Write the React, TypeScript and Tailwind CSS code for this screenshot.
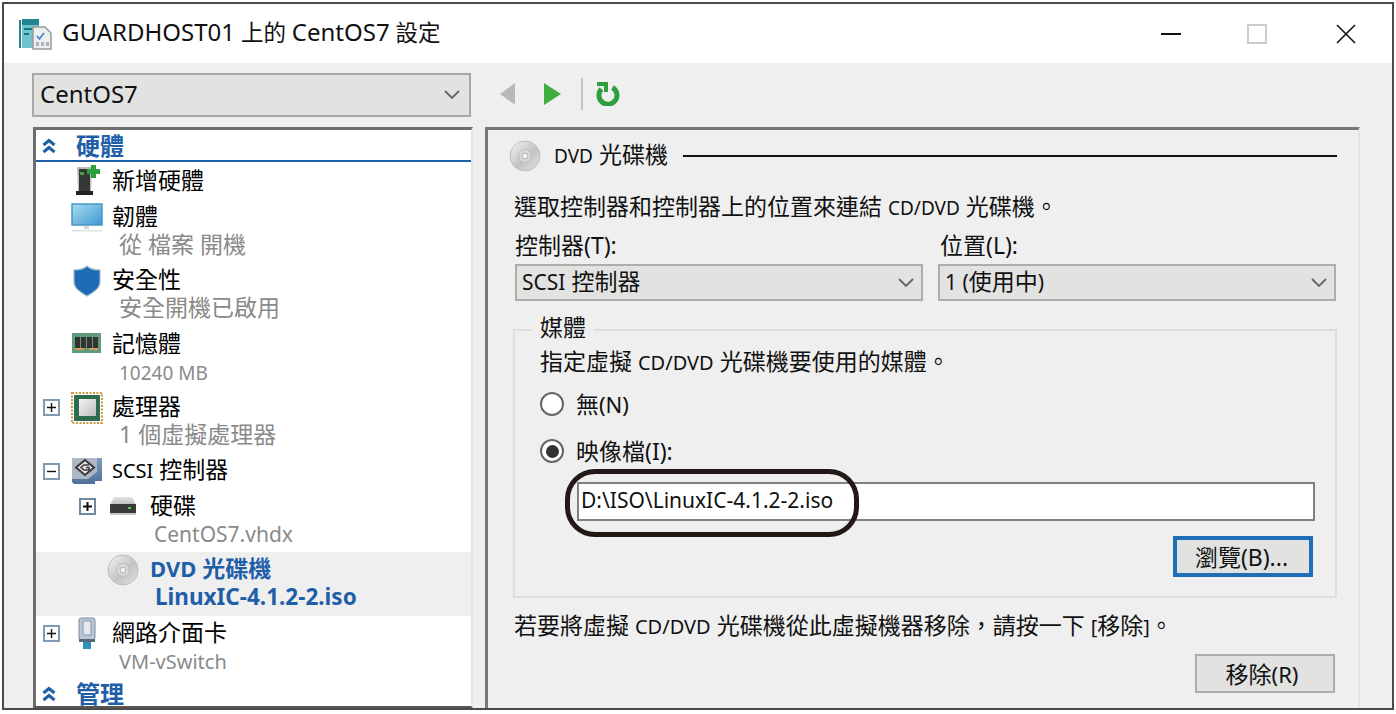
import { ReactNode } from "react"

const blue = "text-[#1f5fa8]"

function TitleIcon() {
  return (
    <svg width="33" height="32" viewBox="0 0 33 32">
      <rect x="0" y="2" width="2" height="28" fill="#1f8490" />
      <rect x="3" y="1" width="17" height="29" fill="#6fc3ca" />
      <rect x="3" y="1" width="17" height="6" fill="#1f8490" />
      <rect x="5" y="10" width="8" height="2" fill="#1f7480" />
      <rect x="5" y="15" width="5" height="2" fill="#1f7480" />
      <path d="M14 9h12l6 6v16H14z" fill="#eceff0" stroke="#9a9a9a" strokeWidth="1.5" />
      <path d="M18 18l2.5 3 4.5-6" fill="none" stroke="#3f7fc0" strokeWidth="1.6" />
      <rect x="17" y="24" width="3" height="4" fill="#b0b4b6" />
      <rect x="22" y="24" width="3" height="4" fill="#b0b4b6" />
      <rect x="27" y="24" width="3" height="4" fill="#b0b4b6" />
    </svg>
  )
}

function AddIcon() {
  return (
    <svg width="32" height="32" viewBox="0 0 32 32">
      <path d="M6 2h15l-1 24H7z" fill="#b9bcbc" />
      <rect x="8" y="4" width="11" height="22" fill="#343836" />
      <rect x="9" y="7" width="4" height="3" fill="#46a046" />
      <rect x="5" y="26" width="17" height="4" fill="#222" />
      <path d="M20 0h5v4h4v5h-4v4h-5V9h-4V4h4z" fill="#2f9e3c" />
    </svg>
  )
}

function MonitorIcon() {
  return (
    <svg width="32" height="32" viewBox="0 0 32 32">
      <defs>
        <linearGradient id="mon" x1="0" y1="0" x2="1" y2="1">
          <stop offset="0" stopColor="#a8dcf2" />
          <stop offset="1" stopColor="#3f97d2" />
        </linearGradient>
      </defs>
      <rect x="1" y="3" width="30" height="21" fill="url(#mon)" stroke="#4a96c4" strokeWidth="1.5" />
      <rect x="13" y="25" width="5" height="3" fill="#d5dadd" />
      <rect x="1" y="29" width="30" height="1.5" fill="#dfe3e5" />
    </svg>
  )
}

function ShieldIcon() {
  return (
    <svg width="32" height="32" viewBox="0 0 32 32">
      <path d="M16 1c3 3 8 4 13 4v12c0 7-8 11-13 14-5-3-13-7-13-14V5c5 0 10-1 13-4z" fill="#1c6bb4" stroke="#a5bccf" strokeWidth="1.2" />
    </svg>
  )
}

function RamIcon() {
  return (
    <svg width="32" height="32" viewBox="0 0 32 32">
      <rect x="1" y="5" width="29" height="20" fill="#5f9c7c" />
      <rect x="4" y="9" width="5" height="11" fill="#333" />
      <rect x="10" y="9" width="5" height="11" fill="#333" />
      <rect x="16" y="9" width="5" height="11" fill="#333" />
      <rect x="22" y="9" width="5" height="11" fill="#333" />
      <rect x="4" y="20" width="9" height="2" fill="#d99a5a" />
      <rect x="18" y="20" width="9" height="2" fill="#d99a5a" />
    </svg>
  )
}

function CpuIcon() {
  return (
    <svg width="32" height="32" viewBox="0 0 32 32">
      <defs>
        <linearGradient id="die" x1="0" y1="0" x2="1" y2="1">
          <stop offset="0" stopColor="#f5f5f5" />
          <stop offset="1" stopColor="#bdbdbd" />
        </linearGradient>
      </defs>
      <rect x="1" y="1" width="30" height="30" fill="none" stroke="#c49a3c" strokeWidth="2" strokeDasharray="2 1.5" />
      <rect x="3" y="3" width="26" height="26" fill="#2f6b50" />
      <rect x="8" y="7" width="17" height="17" fill="url(#die)" />
    </svg>
  )
}

function ScsiIcon() {
  return (
    <svg width="32" height="28" viewBox="0 0 32 28">
      <defs>
        <linearGradient id="scsi" x1="0" y1="0" x2="0" y2="1">
          <stop offset="0" stopColor="#7f9cc2" />
          <stop offset="1" stopColor="#4f6f9a" />
        </linearGradient>
      </defs>
      <path d="M1 1h30v23h-7v3H3l-2-2z" fill="url(#scsi)" />
      <path d="M1 1h25v14L17 22H1z" fill="#aeb8c4" />
      <path d="M14 3l9 7.5L14 18l-9-7.5z" fill="#e4e4e4" stroke="#3a3a3a" strokeWidth="2" />
      <path d="M18 8h-5l-3 2.5 3 2.5h5v-2.5h-3" fill="none" stroke="#3a3a3a" strokeWidth="1.6" />
    </svg>
  )
}

function HddIcon() {
  return (
    <svg width="28" height="20" viewBox="0 0 28 20">
      <defs>
        <linearGradient id="hddtop" x1="0" y1="0" x2="0" y2="1">
          <stop offset="0" stopColor="#e4e4e4" />
          <stop offset="1" stopColor="#bdbdbd" />
        </linearGradient>
      </defs>
      <path d="M5 1h18l4 8H1z" fill="url(#hddtop)" />
      <rect x="1" y="8" width="26" height="9" fill="#3a3a3a" />
      <rect x="1" y="17" width="26" height="2" fill="#c9c9c9" />
      <rect x="19" y="11" width="3" height="2" fill="#5fc05f" />
    </svg>
  )
}

function DiscIcon() {
  return (
    <svg width="32" height="32" viewBox="0 0 32 32">
      <defs>
        <linearGradient id="disc" x1="0" y1="0" x2="1" y2="1">
          <stop offset="0" stopColor="#f4f4f4" />
          <stop offset="0.55" stopColor="#c4c4c4" />
          <stop offset="1" stopColor="#e2e2e2" />
        </linearGradient>
      </defs>
      <circle cx="16" cy="16" r="15" fill="url(#disc)" stroke="#bdbdbd" />
      <circle cx="16" cy="16" r="6.5" fill="#d8d8d8" stroke="#bcbcbc" />
      <circle cx="16" cy="16" r="3" fill="#efefef" stroke="#b2b2b2" />
    </svg>
  )
}

function NicIcon() {
  return (
    <svg width="32" height="32" viewBox="0 0 32 32">
      <rect x="8" y="1" width="16" height="22" rx="2" fill="#b9c6d4" stroke="#7d8ea0" />
      <rect x="12" y="4" width="8" height="14" fill="#e4e9ee" stroke="#8a98a8" />
      <rect x="8" y="22" width="16" height="3" fill="#56687c" />
      <rect x="12" y="25" width="8" height="7" fill="#2f8fbf" />
    </svg>
  )
}

function ChevronUp() {
  return (
    <svg width="14" height="16" viewBox="0 0 14 16">
      <path d="M1.5 7l5.5-4.5L12.500 7M1.500 14l5.500-4.500 5.500 4.500" fill="none" stroke="#1f5fa8" strokeWidth="3" />
    </svg>
  )
}

function Expander({ open, dark }: { open?: boolean; dark?: boolean }) {
  return (
    <span className={"flex h-[17px] w-[17px] items-center justify-center border-2 bg-white " + (dark ? "border-[#6d88a0]" : "border-[#7f9ab2]")}>
      <svg width="11" height="11" viewBox="0 0 11 11">
        <path d={open ? "M1 5.5h9" : "M1 5.5h9M5.5 1v9"} stroke="#111" strokeWidth={dark ? 2 : 1.4} />
      </svg>
    </span>
  )
}

function DropArrow() {
  return (
    <svg width="16" height="10" viewBox="0 0 16 10">
      <path d="M1 1l7 7 7-7" fill="none" stroke="#666" strokeWidth="1.8" />
    </svg>
  )
}

function Section({ label, line }: { label: string; line?: boolean }) {
  return (
    <div className={"flex shrink-0 items-center pl-[6px] " + (line ? "h-[32px] border-b-2 border-[#1f5fa8] pt-[1px]" : "h-[27px] pt-[2px]")}>
      <ChevronUp />
      <span className={"ml-[20px] text-[24px] font-bold leading-[22px] " + blue}>{label}</span>
    </div>
  )
}

type ItemProps = {
  icon: ReactNode
  label: ReactNode
  sub?: ReactNode
  expand?: "plus" | "minus"
  nested?: boolean
  selected?: boolean
}

function Item({ icon, label, sub, expand, nested, selected }: ItemProps) {
  return (
    <div className={"shrink-0 py-[3px] " + (selected ? "bg-[#efefef]" : "")}>
      <div className={"flex h-[29px] items-center " + (nested ? "pl-[43px]" : "pl-[7px]")}>
        <span className="flex w-[17px] justify-center">
          {expand && <Expander open={expand === "minus"} dark={nested} />}
        </span>
        <span className="ml-[11px] flex h-[29px] w-[32px] items-center justify-center">{icon}</span>
        <span className={"mb-[2px] whitespace-nowrap leading-[27px] " + (nested ? "ml-[11px] " : "ml-[9px] ") + (selected ? "font-bold " + blue : "text-black")}>
          {label}
        </span>
      </div>
      {sub && (
        <div className={"h-[28.5px] whitespace-nowrap leading-[24.5px] " + (nested ? "pl-[118px] " : "pl-[83px] ") + (selected ? "font-bold " + blue : "text-[#8a8a8a]")}>
          {sub}
        </div>
      )}
    </div>
  )
}

function Select({ children }: { children: ReactNode }) {
  return (
    <div className="flex h-[37px] items-center justify-between border-2 border-[#adadad] bg-[#e2e2e1] pl-[5px] pr-[7px]">
      <span className="mb-[2px]">{children}</span>
      <DropArrow />
    </div>
  )
}

function Radio({ checked, children }: { checked?: boolean; children: ReactNode }) {
  return (
    <div className="flex h-[30px] items-center">
      <span className="flex h-[24px] w-[24px] items-center justify-center rounded-full border-2 border-[#666] bg-white">
        {checked && <span className="h-[13px] w-[13px] rounded-full bg-[#333]" />}
      </span>
      <span className="ml-[12px]">{children}</span>
    </div>
  )
}

export default function App() {
  return (
    <div className="h-[714px] w-[1396px] overflow-hidden bg-white pb-[4px] pl-[2px] pr-[2px] pt-[2px] font-['Noto_Sans','Noto_Sans_CJK_TC',sans-serif] text-[23px] leading-[30px] text-[#111]">
      <div className="flex h-full flex-col border-2 border-[#4e4a46]">
        <div className="flex h-[59px] shrink-0 items-center bg-white pl-[15px] pr-[36px]">
          <TitleIcon />
          <span className="mb-[2px] ml-[10px] text-[22.5px]">
            <span className="text-[24px]">GUARDHOST01</span> 上的 <span className="text-[24px]">CentOS7</span> 設定
          </span>
          <span className="ml-auto h-[2px] w-[20px] bg-[#111]" />
          <span className="ml-[66px] h-[20px] w-[20px] border-2 border-[#cccccc]" />
          <svg className="ml-[69px]" width="20" height="20" viewBox="0 0 20 20">
            <path d="M1 1l18 18M19 1L1 19" stroke="#111" strokeWidth="1.6" />
          </svg>
        </div>

        <div className="grid min-h-0 flex-1 grid-cols-[441px_875px] grid-rows-[44px_1fr] gap-x-[12px] gap-y-[10px] bg-[#efefef] pl-[28px] pt-[10px]">
          <div className="flex w-[439px] items-center justify-between border-2 border-[#a8a8a8] bg-[#e2e2e1] pl-[6px] pr-[9px]">
            <span className="mb-[2px] text-[24px]">CentOS7</span>
            <DropArrow />
          </div>
          <div className="flex items-center pb-[2px] pl-[15px]">
            <svg width="16" height="22" viewBox="0 0 16 22">
              <path d="M15 0v22L0 11z" fill="#b8b8b8" />
            </svg>
            <svg className="ml-[28px]" width="17" height="22" viewBox="0 0 17 22">
              <path d="M0 0v22l17-11z" fill="#3fae3f" />
            </svg>
            <span className="ml-[20px] h-[32px] w-[2px] bg-[#c4c4c4]" />
            <svg className="ml-[13px]" width="24" height="24" viewBox="0 0 24 24">
              <path d="M5.5 7a9 9 0 1 0 11-1.500" fill="none" stroke="#2e9e3e" strokeWidth="5" />
              <path d="M1 0h11v10H8V4H1z" fill="#2e9e3e" />
            </svg>
          </div>

          <div className="ml-[1px] flex w-[440px] flex-col border-b-2 border-l-[3px] border-r-2 border-t-[3px] border-b-[#555] border-l-[#6e6e6e] border-r-[#e6e6e6] border-t-[#6e6e6e] bg-white">
            <Section label="硬體" line />
            <div className="h-[37.5px] shrink-0 pt-[1.5px]">
              <Item icon={<AddIcon />} label="新增硬體" />
            </div>
            <Item icon={<MonitorIcon />} label="韌體" sub="從 檔案 開機" />
            <Item icon={<ShieldIcon />} label="安全性" sub="安全開機已啟用" />
            <Item icon={<RamIcon />} label="記憶體" sub={<span className="text-[19px]">10240 MB</span>} />
            <Item icon={<CpuIcon />} expand="plus" label="處理器" sub="1 個虛擬處理器" />
            <Item icon={<ScsiIcon />} expand="minus" label={<><span className="text-[20px]">SCSI</span> 控制器</>} />
            <Item icon={<HddIcon />} expand="plus" nested label="硬碟" sub={<span className="text-[21px]">CentOS7.vhdx</span>} />
            <Item
              icon={<DiscIcon />}
              nested
              selected
              label={<><span className="text-[22px]">DVD</span> 光碟機</>}
              sub={<span className="ml-[1px] text-[22.5px]">LinuxIC-4.1.2-2.iso</span>}
            />
            <Item icon={<NicIcon />} expand="plus" label="網路介面卡" sub={<span className="text-[20px]">VM-vSwitch</span>} />
            <Section label="管理" />
          </div>

          <div className="flex flex-col border-l-[3px] border-r-2 border-t-[3px] border-l-[#777] border-r-[#e4e4e4] border-t-[#777] pl-[26px] pr-[21px] pt-[10px]">
            <div className="-ml-[5px] flex h-[32px] shrink-0 items-center">
              <DiscIcon />
              <span className="mb-[2px] ml-[13px] whitespace-nowrap"><span className="text-[19px]">DVD</span> 光碟機</span>
              <span className="ml-[15px] h-[2px] flex-1 bg-[#111]" />
            </div>
            <div className="mt-[19px] h-[32px] leading-[30px]">
              選取控制器和控制器上的位置來連結 <span className="text-[19px]">CD/DVD</span> 光碟機。
            </div>
            <div className="mt-[8px] grid grid-cols-[408px_398px] gap-x-[15px] pl-[1px]">
              <div className="h-[30px] leading-[29px]">控制器<span className="text-[23px]">(T):</span></div>
              <div className="h-[30px] pl-[2px] leading-[29px]">位置<span className="text-[23px]">(L):</span></div>
            </div>
            <div className="mt-[3px] grid grid-cols-[408px_398px] gap-x-[15px] pl-[1px]">
              <Select><span className="text-[21px]">SCSI</span> 控制器</Select>
              <Select><span className="text-[21px]">1 (</span>使用中<span className="text-[21px]">)</span></Select>
            </div>

            <fieldset className="-ml-[1px] mt-[13px] flex flex-col border-2 border-t-2 border-[#dedede] pb-[19px] pl-[25px] pr-[20px] pt-[1px]">
              <legend className="ml-[-8px] px-[8px] pb-[6px] leading-[26px]">媒體</legend>
              <div className="h-[30px] leading-[29px]">指定虛擬 <span className="text-[20px]">CD/DVD</span> 光碟機要使用的媒體。</div>
              <div className="mt-[12px]">
                <Radio>無<span className="text-[22px]">(N)</span></Radio>
              </div>
              <div className="mt-[17px]">
                <Radio checked>映像檔<span className="text-[23px]">(I):</span></Radio>
              </div>
              <div className="relative ml-[37px] mt-[16px] flex h-[39px] items-center border-2 border-[#808080] bg-white pb-[3px] pl-[2px] text-[21px]">
                D:\ISO\LinuxIC-4.1.2-2.iso
                <div className="pointer-events-none absolute left-[-14px] top-[-15px] h-[68px] w-[294px] rounded-[30px] border-[5px] border-[#231815]" />
              </div>
              <div className="mr-[2px] mt-[15px] flex h-[41px] w-[140px] items-center justify-center self-end border-4 border-[#1f6fb8] bg-[#e2e2e1] pr-[3px]">
                瀏覽<span className="text-[23px]">(B)...</span>
              </div>
            </fieldset>

            <div className="mt-[13px] h-[30px] whitespace-nowrap leading-[28px]">
              若要將虛擬 <span className="text-[20px]">CD/DVD</span> 光碟機從此虛擬機器移除，請按一下 <span className="text-[20px]">[</span>移除<span className="text-[20px]">]</span>。
            </div>
            <div className="mr-[2px] mt-[13px] flex h-[39px] w-[140px] shrink-0 items-center justify-center self-end border-2 border-[#adadad] bg-[#e2e2e1] pr-[6px]">
              移除<span className="text-[22px]">(R)</span>
            </div>
          </div>
        </div>
      </div>
    </div>
  )
}
